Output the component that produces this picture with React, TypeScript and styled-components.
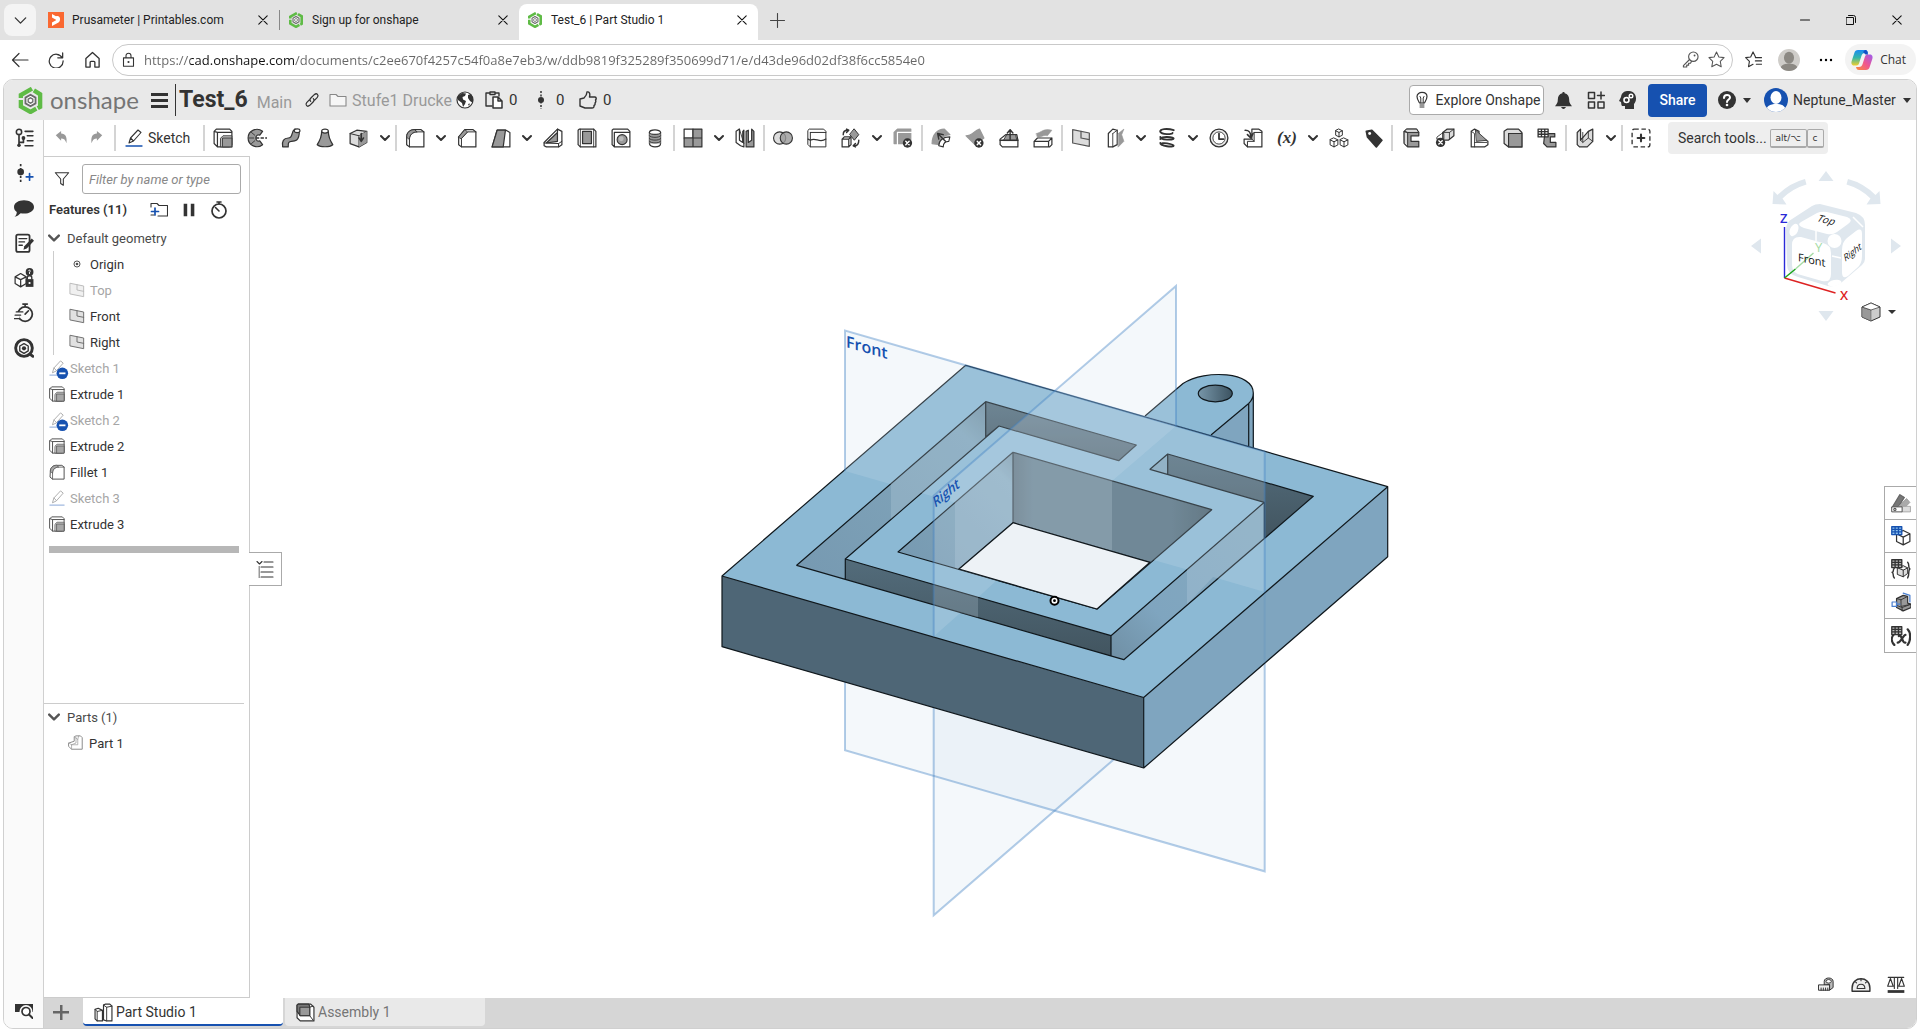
import React from "react";
import styled, { createGlobalStyle } from "styled-components";

const ui = `Roboto, "Liberation Sans", sans-serif`;
const chrome = `"Open Sans", "Noto Sans", sans-serif`;
const ink = "#333333";
const mid = "#999999";
const pale = "#dcdcdc";
const blue = "#1651b0";

const Global = createGlobalStyle`
  * { box-sizing: border-box; }
  body { margin: 0; background: #fff; font-family: ${ui}; font-size: 14px; color: ${ink}; }
  button, input { font: inherit; color: inherit; }
  button { border: 0; background: none; padding: 0; cursor: pointer; display: inline-flex; align-items: center; }
  h1, h2, ul { margin: 0; padding: 0; font: inherit; }
  ul { list-style: none; }
  svg { display: block; flex: none; }
`;

/* ---------- layout ---------- */

const Page = styled.div`
  display: flex;
  flex-direction: column;
  height: 100vh;
  padding-bottom: 3px;
`;

const TabStrip = styled.div`
  display: flex;
  align-items: flex-end;
  height: 40px;
  flex: none;
  background: #e2e2e2;
  padding-left: 4px;
  font-size: 12px;
`;

const TabMenuButton = styled.button`
  width: 32px;
  height: 32px;
  margin: 0 4px 4px 0;
  border-radius: 8px;
  background: #f4f4f4;
  justify-content: center;
`;

const BrowserTab = styled.div<{ $active?: boolean }>`
  display: flex;
  align-items: center;
  width: 239px;
  height: 36px;
  padding: 0 8px 4px;
  border-radius: 8px 8px 0 0;
  background: ${(p) => (p.$active ? "#fff" : "transparent")};
`;

const TabLink = styled.button`
  flex: 1;
  gap: 8px;
  color: #222;
`;

const TabDivider = styled.span`
  width: 1px;
  height: 20px;
  margin-bottom: 10px;
  background: #888;
`;

const PlainButton = styled.button<{ $w?: number }>`
  width: ${(p) => p.$w ?? 16}px;
  justify-content: center;
`;

const NewTab = styled(PlainButton)`
  height: 40px;
`;

const WindowButtons = styled.div`
  display: flex;
  height: 40px;
  margin-left: auto;
`;

const AddressRow = styled.div`
  display: flex;
  align-items: center;
  height: 39px;
  flex: none;
  padding: 0 4px 0 2px;
  font-family: ${chrome};
`;

const AddressBox = styled.label`
  display: flex;
  align-items: center;
  flex: 1;
  height: 32px;
  gap: 8px;
  margin: 0 2px 0 2px;
  padding: 0 8px;
  border: 1px solid #c9c9c9;
  border-radius: 16px;
`;

const AddressInput = styled.input`
  flex: 1;
  min-width: 0;
  padding: 0;
  border: 0;
  outline: 0;
  font-size: 13px;
  color: #666;
  background: linear-gradient(90deg, #666 46px, #111 46px 151px, #666 151px);
  -webkit-background-clip: text;
  background-clip: text;
  -webkit-text-fill-color: transparent;
`;

const ChatButton = styled.button`
  height: 31px;
  gap: 7px;
  padding: 0 10px 0 6px;
  border-radius: 16px;
  background: #f3f3f3;
  font-size: 12px;
`;

const Workspace = styled.div`
  display: flex;
  flex-direction: column;
  flex: 1;
  min-height: 0;
  margin: 0 3px;
  border: 1px solid #d0d0d0;
  border-radius: 10px;
  overflow: hidden;
`;

const DocHeader = styled.header`
  display: flex;
  align-items: center;
  height: 40px;
  flex: none;
  padding: 0 5px 0 13px;
  background: #e9e9e9;
`;

const Brand = styled.a`
  display: flex;
  align-items: center;
  gap: 6px;
  width: 134px;
  color: #757575;
  font-family: Lato, ${ui};
  font-size: 24px;
  line-height: 30px;
  text-decoration: none;
`;

const DocTitle = styled.h1`
  margin: 0 9px 0 4px;
  padding-left: 3px;
  border-left: 1px solid ${ink};
  font-size: 23px;
  line-height: 32px;
  font-weight: 700;
`;

const HeaderGap = styled.span<{ $w: number }>`
  width: ${(p) => p.$w}px;
  flex: none;
`;

const Muted = styled.span`
  padding-top: 4px;
  color: ${mid};
  font-size: 16px;
  white-space: nowrap;
`;

const FolderLink = styled.a`
  display: flex;
  align-items: center;
  gap: 5px;
  width: 127px;
  color: ${mid};
  font-size: 16px;
  text-decoration: none;
  white-space: nowrap;
`;

const CountButton = styled.button<{ $w: number }>`
  gap: 6px;
  width: ${(p) => p.$w}px;
  font-size: ${(p) => (p.$w < 50 ? 15 : 14)}px;
`;

const HeaderRight = styled.div`
  display: flex;
  align-items: center;
  margin-left: auto;
`;

const ExploreButton = styled.button`
  width: 135px;
  height: 30px;
  gap: 5px;
  justify-content: center;
  border: 1px solid #aaa;
  border-radius: 4px;
  background: #fff;
  white-space: nowrap;
`;

const ShareButton = styled.button`
  width: 59px;
  height: 33px;
  justify-content: center;
  border-radius: 4px;
  background: ${blue};
  color: #fff;
  font-weight: 500;
`;

const Below = styled.div`
  display: flex;
  flex: 1;
  min-height: 0;
`;

const Rail = styled.nav`
  display: flex;
  flex-direction: column;
  align-items: center;
  width: 40px;
  flex: none;
  border-right: 1px solid #d0d0d0;
  background: #fafafa;
`;

const RailButton = styled.button<{ $last?: boolean }>`
  width: 39px;
  height: 35px;
  justify-content: center;
  margin-top: ${(p) => (p.$last ? "auto" : "0")};
`;

const Column = styled.div`
  display: flex;
  flex-direction: column;
  flex: 1;
  min-width: 0;
`;

const Toolbar = styled.div`
  display: flex;
  align-items: center;
  height: 36px;
  flex: none;
  padding-left: 1px;
`;

const ToolButton = styled.button<{ $narrow?: boolean }>`
  width: ${(p) => (p.$narrow ? 18 : 34)}px;
  height: 32px;
  flex: none;
  justify-content: center;
`;

const SketchButton = styled.button`
  width: 85px;
  height: 32px;
  gap: 5px;
  padding-left: 8px;
`;

const Separator = styled.span`
  width: 2px;
  height: 26px;
  margin: 0 1px;
  flex: none;
  background: #d4d4d4;
`;

const SearchTools = styled.button`
  width: 160px;
  height: 32px;
  margin-left: 10px;
  padding-left: 10px;
  gap: 3px;
  border-radius: 4px;
  background: #eee;
  white-space: nowrap;
`;

const Keys = styled.span`
  display: flex;
  font-size: 11px;
  line-height: 16px;
`;

const Key = styled.kbd`
  font-family: "DejaVu Sans", sans-serif;
  font-size: 9px;
  padding: 0 5px;
  border: 1px solid #aaa;
  border-bottom-width: 2px;
  border-radius: 2px;
`;

const Stage = styled.div`
  display: flex;
  flex: 1;
  min-height: 0;
`;

const Panel = styled.aside`
  display: flex;
  flex-direction: column;
  position: relative;
  width: 206px;
  flex: none;
  border: 1px solid #ccc;
  border-left: 0;
  font-size: 13px;
`;

const FilterRow = styled.div`
  display: flex;
  align-items: center;
  gap: 12px;
  padding: 7px 8px 0 10px;
`;

const FilterInput = styled.input`
  flex: 1;
  min-width: 0;
  height: 30px;
  padding: 0 6px;
  border: 1px solid #aaa;
  border-radius: 3px;
  font-style: italic;
  &::placeholder { color: #888; opacity: 1; }
`;

const FeatureHead = styled.div`
  display: flex;
  align-items: center;
  height: 31px;
  padding-left: 5px;
`;

const FeatureTitle = styled.h2`
  width: 100px;
  font-weight: 600;
  white-space: nowrap;
`;

const Row = styled.button<{ $dim?: boolean }>`
  display: flex;
  width: 100%;
  height: 26px;
  gap: 5px;
  padding-left: 5px;
  color: ${(p) => (p.$dim ? "#a6a6a6" : ink)};
`;

const GroupRow = styled(Row)`
  gap: 7px;
  padding-left: 4px;
  color: #4a4a4a;
`;

const Nested = styled.ul`
  margin-left: 9px;
  padding-left: 10px;
  border-left: 1px solid #ccc;
`;

const RollbackBar = styled.div`
  height: 7px;
  margin: 9px 10px 0 5px;
  background: #b7b7b7;
`;

const Parts = styled.section`
  height: 294px;
  margin-top: auto;
  margin-right: 5px;
  border-top: 1px solid #ccc;
`;

const PartList = styled.ul`
  padding-left: 19px;
`;

const PanelToggle = styled.button`
  position: absolute;
  left: 100%;
  top: 395px;
  width: 33px;
  height: 34px;
  justify-content: center;
  border: 1px solid #aaa;
  border-left: 0;
  background: #fff;
`;

const Viewport = styled.main`
  display: flex;
  align-items: center;
  justify-content: center;
  position: relative;
  flex: 1;
  min-width: 0;
  overflow: hidden;
`;

const Orientation = styled.div`
  position: absolute;
  top: 9px;
  right: 6px;
`;

const SideTools = styled.div`
  position: absolute;
  right: 0;
  top: 330px;
  display: flex;
  flex-direction: column;
  border: 1px solid #aaa;
  border-right: 0;
`;

const SideTool = styled.button`
  width: 31px;
  height: 33px;
  justify-content: center;
  border-bottom: 1px solid #aaa;
  background: #fff;
  &:last-child { border-bottom: 0; }
`;

const MeasureTools = styled.div`
  position: absolute;
  right: 8px;
  bottom: 4px;
  display: flex;
  align-items: center;
  gap: 11px;
`;

const Sheets = styled.footer`
  display: flex;
  height: 30px;
  flex: none;
  gap: 2px;
  padding-bottom: 2px;
  background: #d6d6d6;
`;

const AddSheet = styled.button`
  width: 37px;
  padding-right: 4px;
  justify-content: center;
`;

const Sheet = styled.button<{ $active?: boolean }>`
  width: 200px;
  gap: 3px;
  padding: 2px 0 0 11px;
  border-bottom: 2px solid ${(p) => (p.$active ? blue : "#e9e9e9")};
  border-radius: 0 0 4px 4px;
  background: ${(p) => (p.$active ? "#fff" : "#e9e9e9")};
  color: ${(p) => (p.$active ? ink : "#757575")};
`;

/* ---------- icons ---------- */

const P = ({ d, f = "none", s = ink, w = 1.1 }: { d: string; f?: string; s?: string; w?: number }) => (
  <path d={d} fill={f} stroke={s} strokeWidth={w} strokeLinejoin="round" strokeLinecap="round" />
);

const Svg = ({ size = 18, box = 18, children }: { size?: number; box?: number; children: React.ReactNode }) => (
  <svg width={size} height={size} viewBox={`0 0 ${box} ${box}`} aria-hidden="true">{children}</svg>
);

const Badge = ({ x, y }: { x: number; y: number }) => (
  <g>
    <circle cx={x} cy={y} r="4.2" fill={ink} />
    <P d={`M${x - 1.5} ${y - 1.5}l3 3m0-3l-3 3`} s="#fff" w={1.3} />
  </g>
);

const Grid = ({ x, y, c = ink, bg = "#fff" }: { x: number; y: number; c?: string; bg?: string }) => (
  <P d={`M${x} ${y}h9v7h-9zM${x} ${y + 2.3}h9M${x} ${y + 4.6}h9M${x + 3} ${y}v7M${x + 6} ${y}v7`} s={c} f={bg} w={1.2} />
);

const icons: Record<string, React.ReactNode> = {
  undo: <P d="M2 6L8 1v3c5 0 7 4 6 11-1-4-3-5.500-6-5.500V12z" f={mid} s="none" />,
  redo: <P d="M16 6L10 1v3c-5 0-7 4-6 11 1-4 3-5.500 6-5.500V12z" f={mid} s="none" />,
  pencil: <><P d="M4 14l1.500-5L13 1l3 2.500L8.500 12z M5.500 9l3 3" /><P d="M1 17h16" s={blue} w={1.3} /></>,
  extrude: <><P d="M1 3l2-2h12l2 2v14H4l-3-3zM1 3l3 1v13M4 4h13" f="#fff" /><P d="M7 9l2-2h8v8l-2 2H7z" f="#c4c4c4" w={0.8} /><path d="M8.500 9H17v8H8.500z" fill={mid} stroke={ink} strokeWidth=".8" /></>,
  revolve: <><P d="M14 3C9-1 1 2 1 9s8 10 13 6l-2.500-3.500c-2 1-3.500-.500-3.500-2.500s1.500-3.500 3.500-2.500z" f={mid} /><P d="M4 4l3 2.500M2 9h4M4 14l3-2.500" w={0.800} /><path d="M8 9h10" stroke={ink} strokeWidth="1.200" strokeDasharray="3 1.200" /></>,
  sweep: <><P d="M1.500 17c-1-5 1-8 5-8 5 0 2-6 6-8l4 2c0 9-4 9-7 9-3 0-3 2-3 5z" f={mid} /><ellipse cx="14.500" cy="2.500" rx="2.600" ry="1.700" fill="#fff" stroke={ink} /></>,
  loft: <><P d="M6 3c0 6-2 9-4 12 3 2.500 11 2.500 14 0-2-3-4-6-4-12z" f={mid} /><ellipse cx="9" cy="2.800" rx="3" ry="1.800" fill="#fff" stroke={ink} /></>,
  thicken: <><P d="M1 5l6-3 9 1v10l-7 4-8-3z" f={pale} /><P d="M1 5l8 2 7-4M9 7v10" w={0.9} /><path d="M9 7l7-4v10l-7 4z" fill={mid} /><P d="M11 5v6m-2-2l2 3 2-3" w={1.4} /></>,
  fillet: <><P d="M1.500 8c0-4 3-6.500 7-6.500h6L17 3.500V17H4L1.500 15z" f="#fff" /><P d="M4 17v-7c0-4 3-6.500 7-6.500h6" w={0.9} /><P d="M1.500 8c0-4 3-6.500 7-6.500l2.500 2c-4 0-7 2.500-7 6.500z" f={mid} w={0.8} /></>,
  chamfer: <><P d="M1.500 8L7 1.500h7.500L17 3.500V17H4L1.500 15z" f="#fff" /><P d="M4 17V9.500L9.500 3.500H17" w={0.9} /><P d="M1.500 8L7 1.500l2.500 2L4 9.500z" f={mid} w={0.8} /></>,
  draft: <><P d="M5.500 2h8L17 4v13H1z" f="#fff" /><P d="M5.500 2H13l-2 15H1z" f={mid} /></>,
  rib: <><P d="M1 13L13 1l4 2v12l-3 2H3l-2-1z" f="#fff" /><P d="M13 1v11L3 13.500 13 4z" f={mid} /><P d="M1 13.500l13 .5 3-2M14 14v3" w={0.9} /></>,
  shell: <><P d="M1 2l1-1h13l2 2v14H3l-2-2z" f="#fff" /><P d="M5 3h8v11H5z" f={mid} /><P d="M3 1v16M15 1v16" w={0.8} /></>,
  hole: <><P d="M1 2l1-1h13l2 2v14H3l-2-2zM3 4v13M3 4h14" f="#fff" /><circle cx="10" cy="10.500" r="4.500" fill={mid} stroke={ink} /><circle cx="9.200" cy="9.700" r="2.200" fill="#bbb" /></>,
  thread: <><P d="M4 4c0-3 10-3 10 0v10c0 4-10 4-10 0z" f="#fff" /><path d="M4 5h10v9H4z" fill={mid} /><P d="M4 4.500c1 2 9 2 10 0M4 7c1 2 9 2 10 0M4 9.500c1 2 9 2 10 0M4 12c1 2 9 2 10 0" w={0.8} /></>,
  pattern: <><P d="M1 1h8v8H1z" f="#fff" /><P d="M9 1h8v8H9zM1 9h8v8H1zM9 9h8v8H9z" f={mid} /></>,
  mirror: <><P d="M1 3l3-2v10l3 2V3l1-1v15l-3-1-4-3z" f="#fff" /><P d="M4 1l4 13" w={0.8} /><P d="M10 17V3l2-1v11l3-2V1l2 2v14z" f={mid} /></>,
  boolean: <><circle cx="6" cy="9" r="5.500" fill="#ddd" stroke={ink} /><circle cx="12" cy="9" r="5.500" fill={mid} fillOpacity=".8" stroke={ink} /></>,
  split: <><P d="M1 2l1-1h13l2 2v14H3l-2-2zM3 4v13M3 4h14" f="#fff" w={0.9} /><P d="M1 10l2 1c5-3 8 3 14-1" /></>,
  transform: <><P d="M1 10l2-2h6v7l-2 2H1zM1 10h6v7M7 10l2-2" f="#fff" /><P d="M12 1l4 5-4 5-4-5z" f={mid} w={0.9} /><P d="M2 6c0-3 1-4 4-4M5 1l2 1-2 2M16 11c0 3-1 5-4 5m1-2l-2 2 2 1" w={1.300} /></>,
  deletePart: <><P d="M1 4l3-3h12v10l-3 3H1z" f={mid} s={mid} /><P d="M4 17V4h13" s="#fff" /><Badge x={13} y={13.500} /></>,
  modifyFillet: <><P d="M1 14C1 6 6 1 12 1l5 5c-6 0-9 4-9 9z" f={mid} s={mid} /><P d="M7 16c0-5 4-8 10-8l-1 4c-3 0-5 2-5 5z" f="#fff" w={1} /><P d="M6 5l7 7m-6-2l-1-5 5 1" w={1.300} /></>,
  deleteFace: <><P d="M1 7C6 7 8 3 13 1l4 8-8 6z" f={mid} s={mid} /><Badge x={12.500} y={13.500} /></>,
  moveFace: <><P d="M1 10l5-4h10l1 5v6H3l-2-2z" f="#fff" /><P d="M4 11l3-5h8l1 5z" f={mid} w={0.8} /><P d="M10 10V2M7.500 4.500L10 1.500l2.500 3M1 11h16" w={1.3} /></>,
  replaceFace: <><P d="M3 5c5-1 6-5 14-3l-4 5c-5-1-5 2-9 1z" f={mid} s={mid} w={0.5} /><P d="M1 12l3-3h13v6l-2 2H1zM1 12h13v5M14 12l3-3" f="#fff" /></>,
  plane: <><P d="M1.500 1.500l15 3v12l-15-3z" f={pale} s="#555" /><P d="M9 3v6l7.500 1.500" s="#555" /></>,
  helixSurface: <><P d="M3 5l4-4 4 1v13l-4 2H3z" f="#fff" /><P d="M7 5v12M7 5l4-3" w={0.8} /><P d="M12 5l5-4-2 5 2 6-5 5z" f={mid} s={mid} w={0.6} /></>,
  helix: <P d="M15 2C9 0 2 1 3 3.500S14 6 14 4.500M3 8c0 3 12 3 12 1.500S3 7 3 10M3 13.500c0 3 12 4 12 2.500S3 12 4 15" w={1.7} />,
  wrap: <><circle cx="9" cy="9" r="8" fill="#eee" stroke={ink} strokeWidth="1.200" /><circle cx="9" cy="9" r="5.500" fill="#fff" stroke={ink} strokeWidth=".8" /><P d="M9 5v5h4" w={1.600} /></>,
  derive: <><P d="M8 1h6l3 2v14H4l-3-3v-4h7z" f="#fff" /><P d="M10 4h7M10 4v8H4v5M8 10l2 2" w={0.9} /><P d="M2 2c4 0 5 2 5 6m-3-2l3 3 2-4" w={1.500} /></>,
  composite: <><P d="M9 1l3 1.500v4L9 8 6 6.500v-4zM6 2.500L9 4l3-1.500M9 4v4" f="#fff" w={0.9} /><P d="M4.500 9l3.500 1.700v4.500L4.500 17 1 15.200v-4.500zM1 10.700l3.500 1.700L8 10.700M4.500 12.400V17M13.500 9l3.500 1.700v4.500L13.500 17 10 15.200v-4.500zM10 10.700l3.500 1.700 3.500-1.700M13.500 12.400V17" f="#fff" w={0.9} /></>,
  tag: <><P d="M3 3l5-1 9 9-5 6-8-9z" f={ink} w={1.5} /><circle cx="6" cy="5" r="1.300" fill="#fff" /></>,
  frame: <><P d="M3 3l2-2h9l2 3v3H9v5h7v5H6l-3-3z" f={mid} /><P d="M3 3l2-2h9l2 3H6zM3 3l3 1v13l-3-3z" f={pale} w={0.900} /></>,
  trimFrame: <><P d="M7 4l4-3h6v6l-5 4H7z" f={pale} /><P d="M7 4h6l4-3M13 4v6M2 8l4-3h2v5H2z" w={0.8} /><Badge x={5} y={13} /></>,
  gusset: <><P d="M2 3l3-2 4 2v4l8 5v3l-3 2H2z" f="#fff" /><P d="M6 2l10 9-9 1z" f={mid} w={0.8} /><P d="M2 3l3 2v12M5 13h11" w={0.8} /></>,
  cutlist: <><P d="M1 3l3-2h10l3 3v13H5l-4-3z" f={pale} /><path d="M5 5h12v12H5z" fill={mid} stroke={ink} /></>,
  frameTable: <><P d="M7 5h9v3h-4v5h5v4H9l-3-3z" f={mid} /><Grid x={1} y={1} /></>,
  sheetMetal: <><P d="M2 4l3-3v10l7-8 4-2v11l-5 5H4l-2-2z" f={pale} /><P d="M5 11l2 2V4M7 13l5-4V3M12 9l4 3" w={0.8} /></>,
  addTool: <><rect x="1" y="1" width="16" height="16" rx="2" fill="none" stroke={ink} strokeDasharray="4 2.400" strokeWidth="1.200" /><P d="M9 6v6M6 9h6" w={1.900} /></>,
  part: <><P d="M1 9l6-2V2l2-1h5l2 2v13H4l-3-3z" f="#fff" s="#777" /><P d="M9 3v6l-5 2v5M1 9l3 2M7 2l4 3v6H4M12 1l-1 4" s="#888" w={0.8} /></>,
  studio: <><P d="M1 6l3-1 4 2v10H3l-2-2z" f="#fff" /><P d="M9 2l2-1h4l2 2v14h-5l-3-1z" f="#fff" /><P d="M1 6l2 2v9M3 8l5-1M9 2l3 2v13M12 4l5-1" w={0.900} /></>,
  assembly: <><P d="M1 2l1-1h12l3 3v13H4l-3-3z" f="#fff" /><P d="M1 2l1-1h10l1 2v9H4L1 8z" f="#777" /><P d="M4 4h9v8H4zM13 4l3-1M13 12l3 4" f={mid} w={0.9} /></>,
  tree: <><circle cx="4.500" cy="3.500" r="2.400" fill="none" stroke={ink} strokeWidth="1.400" /><P d="M4.500 6v10M4.500 13h4V9M10 3h7M12 7h5M12 11.500h5M10 16h7" w={1.500} /><circle cx="4.500" cy="15.500" r="1.600" fill={ink} /><circle cx="8.500" cy="9" r="1.700" fill={ink} /></>,
  version: <><path d="M6 1v16" stroke={ink} strokeWidth="1.500" strokeDasharray="2 1.500" /><circle cx="6" cy="8" r="3" fill={ink} /><P d="M14 9.500v6M11 12.500h6" s={blue} w={1.500} /></>,
  comment: <path d="M9 2c5 0 9 2.500 9 6s-4 6-9 6c-1 0-2 0-3-.300C4.500 15 3 16.500.500 16.800 2 15.500 2.500 14 2.500 12.500 1 11.500 0 10 0 8c0-3.500 4-6 9-6z" fill={ink} />,
  note: <><rect x="2" y="1.500" width="12" height="15.500" rx="1.500" fill="#fff" stroke={ink} strokeWidth="1.600" /><P d="M4.500 5h7M4.500 8h5M4.500 11h3" w={1.200} /><path d="M16 5l2 2-6.500 7-3 1 .800-3z" fill={ink} /></>,
  bom: <><P d="M1 8l5-3 5 3v6l-5 3-5-3zM1 8l5 2.500L11 8M6 10.500V17" w={1.100} f="#fff" /><circle cx="14" cy="3.500" r="3.500" fill={ink} /><path d="M10.500 10h7v7h-7z" fill={ink} /><P d="M12 10V8.500c0-2 4-2 4 0V10" w={1.200} /><P d="M13 2.500c1-1.500 2.500 0 1 1.200V5" s="#fff" w={0.900} /><circle cx="14" cy="13.500" r="1" fill="#fff" /></>,
  stopwatch: <><circle cx="10" cy="10" r="6.500" fill="none" stroke={ink} strokeWidth="1.600" /><P d="M8 1h4M10 1v2M10 10l3-3" w={1.500} /><path d="M0 8h5v6H2z" fill="#fafafa" /><P d="M2 8h6M1 11h5M0 14h5" w={1.100} /></>,
  inspect: <><circle cx="9" cy="9" r="7.500" fill="none" stroke={ink} strokeWidth="2.600" /><P d="M15 15l2 1.500" w={2.600} /><P d="M9 5l3.800 2.200v4.400L9 13.800l-3.800-2.200V7.200z" w={1.200} /><circle cx="9" cy="9.300" r="1.900" fill={ink} /></>,
  tabFind: <><path d="M0 2h18v8H0z" fill={ink} /><circle cx="11" cy="9.500" r="4.500" fill="#fafafa" stroke="#fafafa" strokeWidth="4" /><circle cx="11" cy="9.500" r="4" fill="#fff" stroke={ink} strokeWidth="1.700" /><P d="M14 12.500l3.500 3.500" w={2} /></>,
  funnel: <P d="M1.500 2h15l-6 7v7l-3-2V9z" w={1.200} />,
  folderAdd: <><P d="M4 14H1v0M8 15h9.500V4.500H9L7 2.500H1V6" w={1.100} /><P d="M5 7v7M1.500 10.500h7" s={blue} w={1.700} /></>,
  pause: <path d="M3 2h4v14H3zM11 2h4v14h-4z" fill={ink} />,
  timer: <><circle cx="9" cy="10" r="7" fill="none" stroke={ink} strokeWidth="1.700" /><P d="M7 1h4M9 1v2M9 10L5.500 6.500" w={1.600} /></>,
  origin: <><circle cx="9" cy="9" r="3.400" fill="none" stroke="#333" strokeWidth="1.100" /><circle cx="9" cy="9" r="1.500" fill="#333" /></>,
  list: <><P d="M1 1.500l2.500 2.500L6 1.500M8 2h9M5 7h12M5 12h12M5 17h12" w={1.100} /><path d="M2.500 6H4v12H2.500z" fill={mid} /></>,
  link: <P d="M7.500 10.500c-1-1-1-2.500 0-3.500l4-4c3-2.500 5.500.500 3.500 3l-3 3.200M10.500 7.500c1 1 1 2.500 0 3.500l-4 4C3.500 17.500 1 14.500 3 12l3-3.200" w={1.400} />,
  folder: <P d="M1 15V3.500h6l2 2h8V15z" f="#f6f6f6" s="#888" />,
  globe: <><circle cx="9" cy="9" r="8" fill="#fff" stroke={ink} strokeWidth="1.200" /><path d="M2 5l4-3 4 .500L9 5 6.500 6 7 8.500l3 1.500-1 3-2 3-1-4-4-3zM12 4l3-1 2 4v5l-3-2-2-3zM12 13l2-.500L13 15z" fill={ink} /></>,
  copies: <><P d="M5 2H1v13h6M5 1h5v2.500H5zM10 2h4v3" w={1.400} /><P d="M8 6h5l4 4v7H8zM13 6v4h4" w={1.500} f="#fff" /></>,
  branch: <><path d="M9 0v18" stroke={ink} strokeWidth="1.500" strokeDasharray="2 1.500" /><circle cx="9" cy="9" r="3" fill={ink} /></>,
  thumb: <P d="M1 8l4-1c2-2 3-3 3-6 2-.500 3.500 1 2.500 5H16c1.500 0 1.500 2 .500 3 .500 1 .500 2-.500 3 .300 1 0 2-1 2.500.200 1.500-.500 2.500-2 2.500H6L1 15z" w={1.400} />,
  bulb: <><P d="M6.500 12C5 9.500 4 8 4 5.500c0-5.500 10-5.500 10 0C14 8 13 9.500 11.500 12z" w={1.200} /><P d="M7.800 12V7L7 5.500M10.200 12V7L11 5.500M7 14h4M7 16h4" w={1} /></>,
  bell: <path d="M9 0c.900 0 1.200.600 1.200 1.300C13.500 2 15 4.500 15 8c0 3 .800 4.500 3 7H0c2.200-2.500 3-4 3-7 0-3.500 1.500-6 4.800-6.700C7.800.600 8.100 0 9 0zM6.500 16h5c-.500 2.500-4.500 2.500-5 0z" fill={ink} />,
  apps: <P d="M1.500 1.500h6v6h-6zM1.500 11h6v6h-6zM11 11h6v6h-6zM14 1v7M10.500 4.500h7" w={1.500} />,
  brain: <><path d="M8 0c6-.500 9 3 9 7.500 0 3-1 4-2 5.500v5H6v-3H4c-2 0-1.500-2-2-4L0 10l2-4C2.500 2.500 5 .200 8 0z" fill={ink} /><circle cx="7.500" cy="9" r="2.500" fill="none" stroke="#fff" strokeWidth="1.600" /><circle cx="12" cy="5" r="1.800" fill="none" stroke="#fff" strokeWidth="1.400" /></>,
  help: <><circle cx="9" cy="9" r="9" fill={ink} /><P d="M6 7c0-4 6-4 6-.500C12 8.500 9 8.500 9 11" s="#fff" w={2} /><circle cx="9" cy="14" r="1.300" fill="#fff" /></>,
  wash: <><P d="M1 13L8 1.500l4 2.500-7 11z" f="#777" s="#666" /><P d="M6 13l8-8 3 3.500-6 6z" f="#aaa" s="#999" w={0.8} /><P d="M10 12h7.500v5H10z" f={pale} s="#999" w={0.700} /><P d="M1 12.500h9V17H1z" f="#fff" s="#555" w={0.900} /><circle cx="3.500" cy="14.800" r="1" fill="none" stroke="#555" /></>,
  tableBlue: <><P d="M5 7l6-3 6 3v7l-6 3-6-3zM5 7l6 3 6-3M11 10v7" f="#fff" /><Grid x={0.700} y={0.700} c={blue} bg="#8fc3ee" /></>,
  tableConfig: <><P d="M6 8l5-2 4 2v5l-4 3-5-2zM6 8l5 2 4-2M11 10v6" f={pale} w={0.9} /><P d="M3 8c-2 3 0 4-2 4 2 1 0 3 2 5M15 3c2 2 0 5 2 6-2 1 0 5-2 8" w={1.300} /><Grid x={0.700} y={0.700} bg="#bbb" /></>,
  partsBox: <><P d="M5 6l6-3 4 1v6l3 1v3l-7 3-6-3z" f={mid} /><P d="M5 6l4 1v6l9-2M9 7l6-3M10 17v-3l-5-2M10 14l8-3" w={0.800} /><P d="M1 9h4v4H1zM5 11h3M11 1l6 2v6" s="#4a7fd0" w={1.100} /></>,
  tableVar: <><P d="M3 7c-3 3-3 7 0 10M15 3c3 3 3 10 0 14M7 9c3-2 3 7 6 6M13 8c-2 0-4 7-7 7" w={2} /><Grid x={0.700} y={0.700} bg="#bbb" /></>,
  tape: <><P d="M7 10V6c0-5 10-5 10 0v7l-4 3v-6z" f="#bbb" /><P d="M1 10h12v6H1zM3.500 16v-2.500M6 16v-2.500M8.500 16v-2.500M11 16v-2.500" f="#eee" /><ellipse cx="12" cy="6" rx="3" ry="2" fill="#fff" stroke={ink} /></>,
  protractor: <><P d="M1 15.500v-3c0-11 16-11 16 0v3z" f="#eee" w={1.300} /><P d="M5.500 13c0-5 7-5 7 0zM4 7l1 1M9 4.500V6M14 7l-1 1" w={1} /></>,
  scale: <><P d="M2 3h14M7.500 3v10M10.500 3v10M4 4L1.500 11h5zM14 4l-2.500 7h5z" w={1} /><path d="M1.500 14.500h15V17h-15z" fill={ink} /></>,
};

const Icon = ({ name, size = 18 }: { name: string; size?: number }) => <Svg size={size}>{icons[name]}</Svg>;

const Chevron = ({ size = 10, color = ink, w = 2 }: { size?: number; color?: string; w?: number }) => (
  <Svg size={size} box={10}><P d="M1 3l4 4 4-4" s={color} w={w} /></Svg>
);
const Caret = () => <Svg size={10} box={10}><path d="M1 3h8L5 8z" fill={ink} /></Svg>;
const Cross = ({ size = 10 }: { size?: number }) => <Svg size={size} box={10}><P d="M.8.8l8.400 8.400M9.200.8L.8 9.200" s="#111" w={1.100} /></Svg>;

const OnshapeMark = ({ size }: { size: number }) => (
  <svg width={size} height={size} viewBox="0 0 28 28" aria-hidden="true">
    <g fill="none" stroke="#5fbb46" strokeWidth="4.500">
      <path d="M4 11.500V8.300L15.500 1.800" />
      <path d="M17.500 3.600L24 7.600v13l-2.500 1.400" />
      <path d="M4 13.500v6.800l10 5.600 6-3.400" />
    </g>
    <path d="M14 8l5.200 3v6L14 20l-5.200-3v-6z" fill="#fff" stroke="#6b6b6b" strokeWidth="1.900" strokeLinejoin="round" />
    <path d="M14 11.300l2.400 1.400v2.700L14 16.800l-2.400-1.400v-2.700z" fill="none" stroke="#6b6b6b" strokeWidth="1.400" />
  </svg>
);

const PrintablesMark = () => (
  <Svg size={16} box={16}>
    <path d="M0 0h16v16H0z" fill="#fa6831" />
    <path d="M4 2l4 2.200v3.600L4 5.500zM8 4.200C12 2.500 13.500 8 10.500 10.500L4 14v-3.500l4-2.300z" fill="#fff" />
  </Svg>
);

const Person = ({ size = 24, bg = blue, fg = "#fff" }: { size?: number; bg?: string; fg?: string }) => (
  <svg width={size} height={size} viewBox="0 0 24 24" aria-hidden="true">
    <defs><clipPath id={`p${size}`}><circle cx="12" cy="12" r="12" /></clipPath></defs>
    <g clipPath={`url(#p${size})`}>
      <path d="M0 0h24v24H0z" fill={bg} />
      <ellipse cx="12" cy="9.500" rx="5.500" ry="6.500" fill={fg} />
      <path d="M2 24c0-6 4-8 10-8s10 2 10 8z" fill={fg} />
    </g>
  </svg>
);

const CopilotMark = () => (
  <Svg size={22} box={22}>
    <defs>
      <linearGradient id="cpA" x1="0" y1="0" x2="0" y2="1"><stop offset="0" stopColor="#1b8cf2" /><stop offset=".5" stopColor="#35b7a8" /><stop offset="1" stopColor="#f2cf2b" /></linearGradient>
      <linearGradient id="cpB" x1="1" y1="0" x2="0" y2="1"><stop offset="0" stopColor="#9b5cf0" /><stop offset=".5" stopColor="#f0568f" /><stop offset="1" stopColor="#fb8c3a" /></linearGradient>
    </defs>
    <path d="M7 1h7c2 0 2.500 1 3 3h-3c-2 0-3 1-3.600 3L8 14.500C7.500 16 6.500 16.500 5 16.500H3C.500 16.500 0 14 .700 12L3.500 3.500C4 2 5 1 7 1z" fill="url(#cpA)" />
    <path d="M15 21H8c-2 0-2.500-1-3-3h3c2 0 3-1 3.600-3L14 7.500c.500-1.500 1.500-2 3-2h2c2.500 0 3 2.500 2.300 4.500L18.500 18.500C18 20 17 21 15 21z" fill="url(#cpB)" />
    <path d="M14 1c2 0 2.500 1 3 4.500h-2.500L12 3z" fill="#1551c8" />
  </Svg>
);

/* ---------- model ---------- */

const Edge = ({ d }: { d: string }) => <path d={d} fill="none" stroke="#10181d" strokeWidth="1.200" strokeLinejoin="round" />;

const Model = () => {
  const top = "#8cb9d4";
  const side = "#7fa5bf";
  const dark = "#4e6676";
  const tint = "rgb(206,222,236)";
  const line = "#3f7fc4";
  return (
    <svg width="733" height="681" viewBox="717 237 733 681" role="img" aria-label="Part 1 with Front and Right planes">
      <defs>
        <linearGradient id="wallL" x1="1" y1="0" x2="0" y2="1"><stop offset="0" stopColor="#6f8d9f" /><stop offset=".15" stopColor="#82a6bb" /><stop offset="1" stopColor="#7699b1" /></linearGradient>
        <linearGradient id="wallD" x1="0" y1="0" x2="0" y2="1"><stop offset="0" stopColor="#536c7b" /><stop offset="1" stopColor="#425560" /></linearGradient>
        <linearGradient id="holeD" x1="0" y1="0" x2="1" y2="0"><stop offset="0" stopColor="#4a5d69" /><stop offset=".1" stopColor="#56707f" /><stop offset=".8" stopColor="#56707f" /><stop offset="1" stopColor="#475c68" /></linearGradient>
        <linearGradient id="wallR" x1="0" y1="1" x2="1" y2="0"><stop offset="0" stopColor="#6f8fa4" /><stop offset=".3" stopColor="#7fa5bf" /><stop offset="1" stopColor="#86aabf" /></linearGradient>
        <linearGradient id="bore" x1="0" y1="0" x2="1" y2="0"><stop offset="0" stopColor="#7796a9" /><stop offset="1" stopColor="#3c5361" /></linearGradient>
      </defs>
      <g fill={tint} fillOpacity=".22">
        <path d="M845 600H1264.700V871.300L845 750.300z" />
        <path d="M933.700 640H1176V705.600L933.700 915.300z" />
      </g>
      <g stroke={line} strokeOpacity=".4" strokeWidth="2" fill="none">
        <path d="M845 600V750.300L1264.700 871.300V600" />
        <path d="M933.700 640V915.300L1176 705.600" />
      </g>
      <path d="M1145 416L1183 383.500C1206 369 1253.300 372 1253.300 393V450L1211 436z" fill={top} />
      <path d="M1211 435L1248.700 403.500Q1253.300 399 1253.300 393V449z" fill={side} />
      <Edge d="M1145 416L1183 383.500C1206 369 1253.300 372 1253.300 393V448M1211 435L1248.700 403.500V446M1248.700 403.500Q1253.300 399 1253.300 393" />
      <ellipse cx="1215.300" cy="393.500" rx="17" ry="8.300" fill="url(#bore)" stroke="#10181d" strokeWidth="1.200" />
      <path d="M965.700 365.300L1387.700 486.700L1143.700 697.500L722 576z" fill={top} />
      <path d="M722 576L1143.700 697.500V768L722 646.700z" fill={dark} />
      <path d="M1387.700 486.700V556.700L1143.700 768V697.500z" fill={side} />
      <path d="M985.700 401.700V437L845.300 559V579.300L796.700 565.300z" fill="url(#wallL)" />
      <path d="M985.700 401.700L1136.300 445L1118.700 460.700L999 426L985.700 437z" fill="url(#wallD)" />
      <path d="M1167.700 454L1150 469.300L1167.700 474.500z" fill="#82a6bb" />
      <path d="M1167.700 454L1313.300 496.300L1264.300 538V502.300L1167.700 474.500z" fill="url(#wallD)" />
      <path d="M845.300 559L1111 635.700V656L845.300 579.300z" fill="url(#wallD)" />
      <path d="M1264.300 502.300V538L1123.800 659.700L1111 656V635.700z" fill="url(#wallR)" />
      <path d="M1013 452.300V522.700L959 569L898 552z" fill="url(#wallL)" />
      <path d="M1013 452.300L1211.700 509.700L1150 562.800L1013 522.700z" fill="url(#holeD)" />
      <Edge d="M965.700 365.300L1387.700 486.700L1143.700 697.500L722 576zM722 576V646.700L1143.700 768V697.500M1387.700 486.700V556.700L1143.700 768" />
      <Edge d="M999 426L985.700 437V401.700L1136.300 445L1118.700 460.700L999 426L845.300 559L1111 635.700L1264.300 502.300L1150 469.300L1167.700 454L1313.300 496.300L1123.800 659.700L796.700 565.300L985.700 401.700M1167.700 454V474.500M1264.300 502.300V538M845.300 559V579.300M1111 635.700V656" />
      <Edge d="M1013 452.300L1211.700 509.700L1097 609L898 552zM1013 452.300V522.700M959 569L1013 522.700L1150 562.500" />
      <g fill={tint} fillOpacity=".22">
        <path d="M845 330.500L1264.700 451.500V592L1213 577L1187 604.500V569.500L1153.500 560L1097 609L955 568V502.600L921 493L891 519V484.300L845 471z" />
        <path d="M933.700 495.700L1176 286V426L1112 481V551L996 581L978 597.500V617.500L960.500 612.700L933.700 636.500z" />
      </g>
      <path d="M1013 522.700L1150 562.300L1097 609L959 569z" fill="#edf2f6" stroke="#10181d" strokeWidth="1.200" />
      <g stroke={line} strokeOpacity=".4" strokeWidth="2" fill="none">
        <path d="M845 471V330.500L1264.700 451.500V592" />
        <path d="M933.700 636.500V495.700L1176 286V426" />
        <path d="M1264.700 592V663" strokeOpacity=".15" />
      </g>
      <g fill={blue} fontFamily='"Open Sans", sans-serif' fontWeight="600">
        <text fontSize="16" transform="translate(846 347) skewY(16)">Front</text>
        <text fontSize="13" transform="translate(935 508) rotate(-40) skewX(-25)">Right</text>
      </g>
      <circle cx="1054.500" cy="600.700" r="4" fill="#fff" stroke="#000" strokeWidth="2" />
      <circle cx="1054.500" cy="600.700" r="1.400" fill="#000" />
    </svg>
  );
};

const ViewCube = () => (
  <svg width="160" height="165" viewBox="1750 165 160 165" role="img" aria-label="View cube">
    <g fill="#dfe7ee">
      <path d="M1826 171l7.500 10h-15zM1826 321l7.500-10h-15zM1751 246l10-7.500v15zM1901 246l-10-7.500v15z" />
      <path d="M1805 179l1.500 5.500q-14 4-24 14l4 6-14-.500 1-13 4 4q12-12 27.500-16zM1848 179l-1.500 5.500q14 4 24 14l-4 6 14-.500-1-13-4 4q-12-12-27.500-16z" />
      <path d="M1786 230q0-8 6-11l20-13q3-2 8-2l36 9q9 3 9 12v34q0 3-3 6l-20 17q-6 5-14 4l-30-9q-11-3-11-12z" />
    </g>
    <g fill="#fff">
      <path d="M1792 245q0-9 9-8l22 6q8 2 8 10v21q0 9-9 7l-21-6q-9-2-9-10z" />
      <path d="M1801 222l16-9q4-2 10-1l20 5q7 3 1 7l-11 8q-4 3-10 2l-23-6q-8-3-3-6z" />
      <path d="M1842 250q0-8 5-12l9-7q6-4 6 3v22q0 8-5 12l-9 8q-6 4-6-4z" />
      <circle cx="1834.500" cy="241" r="7" /><ellipse cx="1794" cy="230" rx="4" ry="6.500" transform="rotate(25 1794 230)" /><ellipse cx="1834.500" cy="283" rx="7" ry="3" transform="rotate(-12 1834.500 283)" />
    </g>
    <path d="M1816 231v10M1832 256l9 2M1853 217l10 10" stroke="#fff" strokeWidth="1.500" />
    <path d="M1784.500 227v51" stroke="#2a2ad8" strokeWidth="1.400" />
    <path d="M1784.500 278l51 15" stroke="#dd2222" strokeWidth="1.400" />
    <path d="M1784.500 278l11-9" stroke="#1aa51a" strokeWidth="1.400" />
    <path d="M1795.500 269l18-16" stroke="#a5dba5" strokeWidth="1.400" />
    <g fontFamily='"Open Sans", sans-serif'>
      <text x="1780" y="223" fontSize="13" fontWeight="600" fill="#2a2ad8">Z</text>
      <text x="1840" y="300" fontSize="13" fontWeight="600" fill="#dd2222">X</text>
      <text x="1815" y="252" fontSize="13" fill="#a5dba5">Y</text>
      <text fontSize="11" fill="#111" transform="translate(1798 261) skewY(12)">Front</text>
      <text fontSize="9" fill="#111" transform="translate(1845 262) rotate(-38) skewX(-25)">Right</text>
      <text fontSize="10" fill="#111" transform="translate(1816 221) rotate(14) skewX(-20)">Top</text>
    </g>
    <path d="M1862 307l9-4 9 4v10l-9 4-9-4z" fill="#ccc" stroke={ink} />
    <path d="M1862 307l9 3v11l-9-4z" fill="#999" stroke="#555" strokeWidth=".5" />
    <path d="M1862 307l9-4 9 4-9 3z" fill="#fff" stroke={ink} strokeWidth=".7" />
    <path d="M1888 310h8l-4 4z" fill={ink} />
  </svg>
);

/* ---------- data ---------- */

const tools =
  "extrude revolve sweep loft thicken v | fillet v chamfer draft v rib shell hole thread | pattern v mirror | boolean split transform v deletePart | modifyFillet deleteFace moveFace replaceFace | plane helixSurface v helix v wrap derive variable v composite tag | frame trimFrame gusset cutlist frameTable | sheetMetal v | addTool".split(" ");

const rail = ["tree", "version", "comment", "note", "bom", "stopwatch", "inspect"];

const geometry = [
  { name: "Origin", icon: "origin" },
  { name: "Top", icon: "plane", dim: true },
  { name: "Front", icon: "plane" },
  { name: "Right", icon: "plane" },
];

const features = [
  { name: "Sketch 1", icon: "pencil", dim: true, badge: true },
  { name: "Extrude 1", icon: "extrude" },
  { name: "Sketch 2", icon: "pencil", dim: true, badge: true },
  { name: "Extrude 2", icon: "extrude" },
  { name: "Fillet 1", icon: "fillet" },
  { name: "Sketch 3", icon: "pencil", dim: true },
  { name: "Extrude 3", icon: "extrude" },
];

const FeatureIcon = ({ icon, dim, badge }: { icon: string; dim?: boolean; badge?: boolean }) => (
  <svg width="16" height="16" viewBox="0 0 18 18" overflow="visible" aria-hidden="true">
    <g opacity={dim ? 0.4 : 0.85}>{icons[icon]}</g>
    {badge && <><circle cx="15" cy="15" r="6.500" fill={blue} /><path d="M11.500 14h7v2h-7z" fill="#fff" /></>}
  </svg>
);

const VariableMark = styled.span`
  font: italic 700 17px "Liberation Serif", serif;
`;

export default function App() {
  return (
    <Page>
      <Global />
      <TabStrip>
        <TabMenuButton aria-label="Tab actions"><Chevron size={13} w={1} /></TabMenuButton>
        <BrowserTab>
          <TabLink><PrintablesMark />Prusameter | Printables.com</TabLink>
          <PlainButton aria-label="Close tab"><Cross /></PlainButton>
        </BrowserTab>
        <TabDivider />
        <BrowserTab>
          <TabLink><OnshapeMark size={16} />Sign up for onshape</TabLink>
          <PlainButton aria-label="Close tab"><Cross /></PlainButton>
        </BrowserTab>
        <BrowserTab $active>
          <TabLink><OnshapeMark size={16} />Test_6 | Part Studio 1</TabLink>
          <PlainButton aria-label="Close tab"><Cross /></PlainButton>
        </BrowserTab>
        <NewTab $w={38} aria-label="New tab"><Svg size={15} box={15}><P d="M7.500.5v14M.5 7.500h14" s="#444" /></Svg></NewTab>
        <WindowButtons>
          <PlainButton $w={46} aria-label="Minimize"><Svg size={10} box={10}><P d="M.5 5h9" s="#111" /></Svg></PlainButton>
          <PlainButton $w={46} aria-label="Restore"><Svg size={10} box={10}><P d="M.5 2.500h7v7h-7zM2.500.5h5q2 0 2 2v5" s="#111" w={1} /></Svg></PlainButton>
          <PlainButton $w={46} aria-label="Close"><Cross /></PlainButton>
        </WindowButtons>
      </TabStrip>

      <AddressRow>
        <PlainButton $w={36} aria-label="Back"><Svg><P d="M17 9H1.500M8 2.500L1.500 9 8 15.500" w={1.200} /></Svg></PlainButton>
        <PlainButton $w={36} aria-label="Reload"><Svg size={16}><P d="M16 6.500A7.800 7.800 0 1 0 17 10M16.500 1v5.500H11" w={1.400} /></Svg></PlainButton>
        <PlainButton $w={36} aria-label="Home"><Svg size={17}><P d="M2 8l7-6.500L16 8v9h-4.500v-5q0-1-1-1h-3q-1 0-1 1v5H2z" w={1.400} /></Svg></PlainButton>
        <AddressBox>
          <Svg size={15} box={18}><P d="M3 7h12v10H3zM6 7V4.500c0-4 6-4 6 0V7" w={1.300} /><circle cx="9" cy="12" r="1.300" fill={ink} /></Svg>
          <AddressInput aria-label="Address" defaultValue="https://cad.onshape.com/documents/c2ee670f4257c54f0a8e7eb3/w/ddb9819f325289f350699d71/e/d43de96d02df38f6cc5854e0" />
          <PlainButton $w={20} aria-label="Passwords"><Svg size={17}><circle cx="12" cy="6" r="5" fill="none" stroke="#555" strokeWidth="1.200" /><circle cx="13.300" cy="4.700" r="1" fill="#555" /><P d="M8 9l-6.500 6.500V17H5v-2h2v-2h2l1-2" s="#555" w={1.200} /></Svg></PlainButton>
          <PlainButton aria-label="Favorite"><Svg size={17}><P d="M9 1l2.500 5.300 5.500.700-4 4 1 5.700-5-2.700-5 2.700 1-5.700-4-4 5.500-.700z" s="#555" /></Svg></PlainButton>
        </AddressBox>
        <PlainButton $w={36} aria-label="Favorites"><Svg size={17}><P d="M11 6L8.500 1 6 6.300.7 7l4 4-1 5.700L8.500 14M11 7h6.500M11 10.500h6.500M12 14h5.500" w={1.200} /></Svg></PlainButton>
        <PlainButton $w={36} aria-label="Profile"><Person size={22} bg="#cfcdc9" fg="#8c8983" /></PlainButton>
        <PlainButton $w={38} aria-label="Settings"><Svg size={14} box={14}><circle cx="2" cy="7" r="1.200" /><circle cx="7" cy="7" r="1.200" /><circle cx="12" cy="7" r="1.200" /></Svg></PlainButton>
        <ChatButton><CopilotMark />Chat</ChatButton>
      </AddressRow>

      <Workspace>
        <DocHeader>
          <Brand href="#"><OnshapeMark size={27} />onshape</Brand>
          <PlainButton aria-label="Menu"><Svg size={17} box={17}><path d="M0 1h17v3H0zM0 7h17v3H0zM0 13h17v3H0z" fill={ink} /></Svg></PlainButton>
          <HeaderGap $w={4} />
          <DocTitle>Test_6</DocTitle>
          <Muted>Main</Muted>
          <HeaderGap $w={11} />
          <PlainButton $w={18} aria-label="Copy link"><Icon name="link" size={16} /></PlainButton>
          <HeaderGap $w={8} />
          <FolderLink href="#"><Icon name="folder" />Stufe1 Drucke</FolderLink>
          <PlainButton $w={18} aria-label="Public"><Icon name="globe" /></PlainButton>
          <HeaderGap $w={11} />
          <CountButton $w={47}><Icon name="copies" />0</CountButton>
          <CountButton $w={47}><Icon name="branch" />0</CountButton>
          <CountButton $w={40}><Icon name="thumb" />0</CountButton>
          <HeaderRight>
            <ExploreButton><Icon name="bulb" />Explore Onshape</ExploreButton>
            <HeaderGap $w={11} />
            <PlainButton $w={17} aria-label="Notifications"><Icon name="bell" size={17} /></PlainButton>
            <HeaderGap $w={15} />
            <PlainButton $w={18} aria-label="Apps"><Icon name="apps" /></PlainButton>
            <HeaderGap $w={14} />
            <PlainButton $w={18} aria-label="Advisor"><Icon name="brain" /></PlainButton>
            <HeaderGap $w={11} />
            <ShareButton>Share</ShareButton>
            <HeaderGap $w={11} />
            <CountButton $w={46} aria-label="Help"><Icon name="help" /><Caret /></CountButton>
            <Person />
            <HeaderGap $w={5} />
            <CountButton $w={118}>Neptune_Master<Caret /></CountButton>
          </HeaderRight>
        </DocHeader>

        <Below>
          <Rail>
            {rail.map((n) => <RailButton key={n} aria-label={n}><Icon name={n} size={20} /></RailButton>)}
            <RailButton $last aria-label="Tab manager"><Icon name="tabFind" /></RailButton>
          </Rail>
          <Column>
            <Toolbar>
              <ToolButton aria-label="Undo"><Icon name="undo" size={16} /></ToolButton>
              <ToolButton aria-label="Redo"><Icon name="redo" size={16} /></ToolButton>
              <Separator />
              <SketchButton><Icon name="pencil" />Sketch</SketchButton>
              <Separator />
              {tools.map((t, i) =>
                t === "|" ? <Separator key={i} />
                : t === "v" ? <ToolButton key={i} $narrow aria-label="More"><Chevron /></ToolButton>
                : t === "variable" ? <ToolButton key={i} aria-label={t}><VariableMark>(x)</VariableMark></ToolButton>
                : <ToolButton key={i} aria-label={t}><Icon name={t} size={20} /></ToolButton>
              )}
              <SearchTools>Search tools...<Keys><Key>alt/⌥</Key><Key>c</Key></Keys></SearchTools>
            </Toolbar>
            <Stage>
              <Panel>
                <FilterRow>
                  <Icon name="funnel" size={16} />
                  <FilterInput aria-label="Filter" placeholder="Filter by name or type" />
                </FilterRow>
                <FeatureHead>
                  <FeatureTitle>Features (11)</FeatureTitle>
                  <PlainButton $w={20} aria-label="Add folder"><Icon name="folderAdd" /></PlainButton>
                  <PlainButton $w={40} aria-label="Pause"><Icon name="pause" size={16} /></PlainButton>
                  <PlainButton $w={20} aria-label="Regeneration times"><Icon name="timer" /></PlainButton>
                </FeatureHead>
                <GroupRow><Chevron size={12} color="#555" />Default geometry</GroupRow>
                <Nested>
                  {geometry.map((g) => (
                    <li key={g.name}><Row $dim={g.dim}><FeatureIcon {...g} />{g.name}</Row></li>
                  ))}
                </Nested>
                <ul>
                  {features.map((f) => (
                    <li key={f.name}><Row $dim={f.dim}><FeatureIcon {...f} />{f.name}</Row></li>
                  ))}
                </ul>
                <RollbackBar />
                <Parts>
                  <GroupRow><Chevron size={12} color="#555" />Parts (1)</GroupRow>
                  <PartList><li><Row><FeatureIcon icon="part" />Part 1</Row></li></PartList>
                </Parts>
                <PanelToggle aria-label="Toggle feature list"><Icon name="list" /></PanelToggle>
              </Panel>
              <Viewport>
                <Model />
                <Orientation><ViewCube /></Orientation>
                <SideTools>
                  {["wash", "tableBlue", "tableConfig", "partsBox", "tableVar"].map((n) => (
                    <SideTool key={n} aria-label={n}><Icon name={n} size={20} /></SideTool>
                  ))}
                </SideTools>
                <MeasureTools>
                  {["tape", "protractor", "scale"].map((n) => (
                    <PlainButton key={n} $w={24} aria-label={n}><Icon name={n} size={n === "tape" ? 16 : 20} /></PlainButton>
                  ))}
                </MeasureTools>
              </Viewport>
            </Stage>
            <Sheets>
              <AddSheet aria-label="Add tab"><Svg size={16} box={16}><path d="M7 1h2.500v6H16v2.500H9.500V16H7V9.500H0V7h7z" fill="#666" /></Svg></AddSheet>
              <Sheet $active><Icon name="studio" size={19} />Part Studio 1</Sheet>
              <Sheet><Icon name="assembly" size={19} />Assembly 1</Sheet>
            </Sheets>
          </Column>
        </Below>
      </Workspace>
    </Page>
  );
}
